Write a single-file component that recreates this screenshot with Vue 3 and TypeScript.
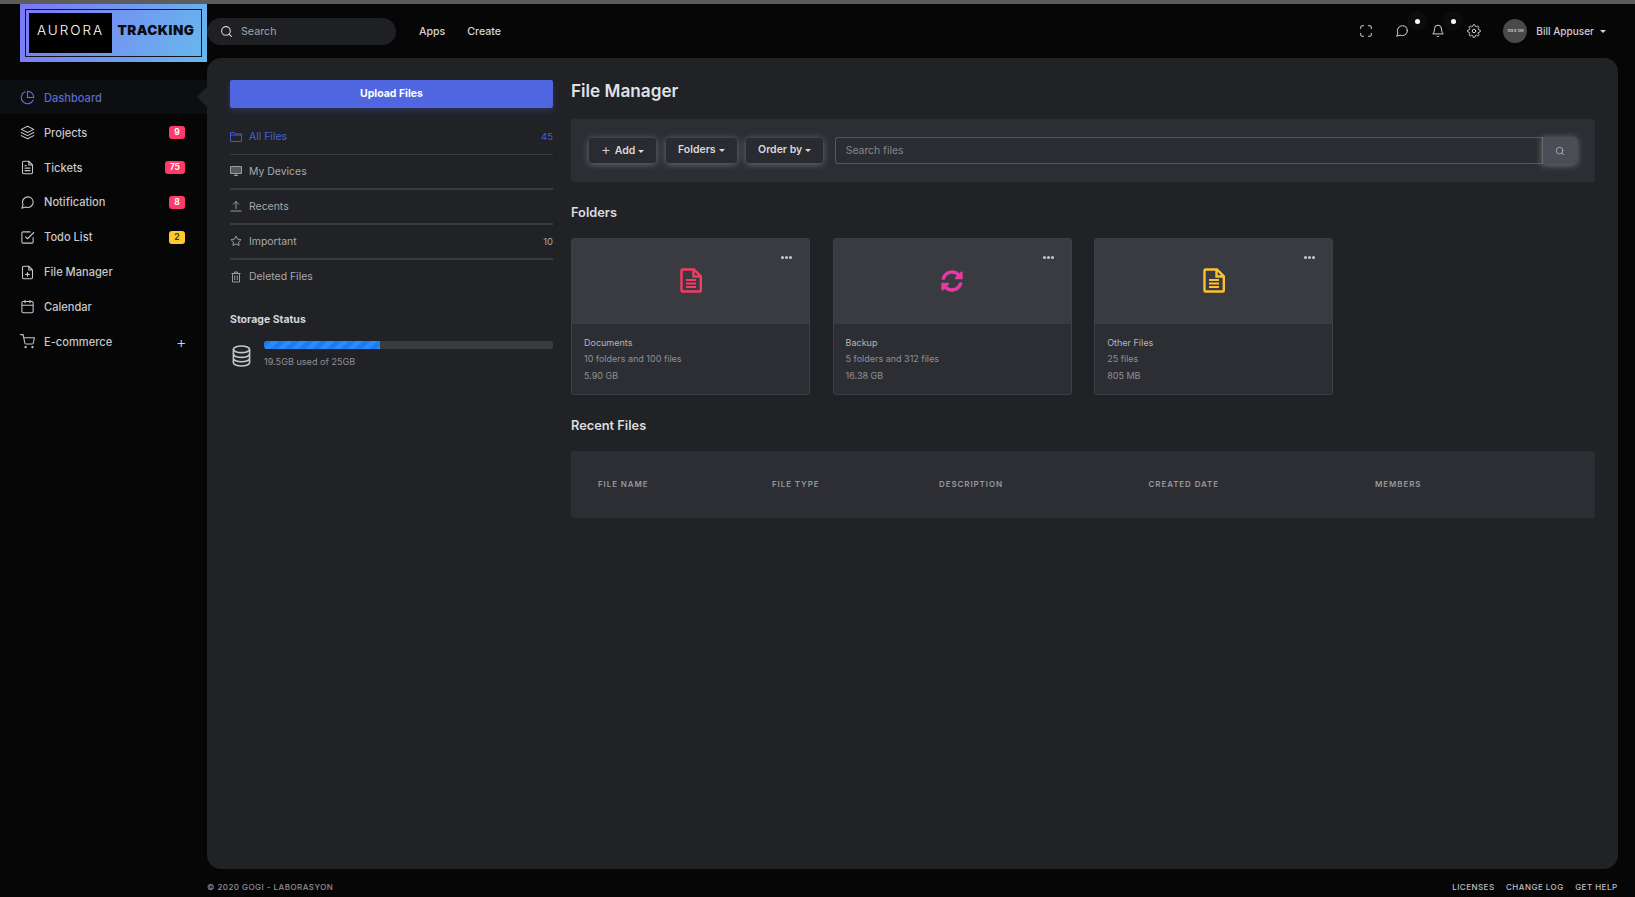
<script setup lang="ts">
const msgPath = 'M21 11.5a8.38 8.38 0 0 1-.9 3.8 8.5 8.5 0 0 1-7.6 4.7 8.38 8.38 0 0 1-3.8-.9L3 21l1.9-5.7a8.38 8.38 0 0 1-.9-3.8 8.5 8.5 0 0 1 4.7-7.6 8.38 8.38 0 0 1 3.8-.9h.5a8.48 8.48 0 0 1 8 8v.5z'
const docPath = 'M14 2H6a2 2 0 0 0-2 2v16a2 2 0 0 0 2 2h12a2 2 0 0 0 2-2V8z M14 2v6h6'
const navItems = [
  { label: 'Dashboard', active: true, d: 'M21.21 15.89A10 10 0 1 1 8 2.83 M22 12A10 10 0 0 0 12 2v10z' },
  { label: 'Projects', badge: '9', tone: 'red', d: 'M12 2 2 7l10 5 10-5-10-5z M2 17l10 5 10-5 M2 12l10 5 10-5' },
  { label: 'Tickets', badge: '75', tone: 'red', d: docPath + ' M16 13H8 M16 17H8 M10 9H8' },
  { label: 'Notification', badge: '8', tone: 'red', d: msgPath },
  { label: 'Todo List', badge: '2', tone: 'yellow', d: 'M9 11l3 3L22 4 M21 12v7a2 2 0 0 1-2 2H5a2 2 0 0 1-2-2V5a2 2 0 0 1 2-2h11' },
  { label: 'File Manager', d: docPath + ' M12 18v-6 M9 15h6' },
  { label: 'Calendar', d: 'M5 4h14a2 2 0 0 1 2 2v14a2 2 0 0 1-2 2H5a2 2 0 0 1-2-2V6a2 2 0 0 1 2-2z M16 2v4 M8 2v4 M3 10h18' },
  { label: 'E-commerce', plus: true, cart: true, d: 'M1 1h4l2.68 13.39a2 2 0 0 0 2 1.61h9.72a2 2 0 0 0 2-1.61L23 6H6' },
]
const fileItems = [
  { label: 'All Files', count: '45', active: true, fill: 'none', d: 'M1 3h8l2 3h12v15H1z M1 8h22' },
  { label: 'My Devices', fill: 'rgba(167,168,171,.4)', d: 'M1 3h22v14H1z M8 21h8 M12 17v4' },
  { label: 'Recents', fill: 'none', d: 'M12 18V3 M6 9l6-6 6 6 M1 22h22' },
  { label: 'Important', count: '10', fill: 'none', d: 'M12 2l3.09 6.26L22 9.27l-5 4.87 1.18 6.88L12 17.77l-6.18 3.25L7 14.14 2 9.27l6.91-1.01L12 2z' },
  { label: 'Deleted Files', fill: 'none', d: 'M3 5h18 M9 5V2h6v3 M5 5v17h14V5 M9.500 9v9 M14.500 9v9' },
]
const syncPath = 'M370.72 133.28C339.458 104.008 298.888 87.962 255.848 88c-77.458.068-144.328 53.178-162.791 126.85-1.344 5.363-6.122 9.15-11.651 9.15H24.103c-7.498 0-13.194-6.807-11.807-14.176C33.933 94.924 134.813 8 256 8c66.448 0 126.791 26.136 171.315 68.685L463.03 40.97C478.149 25.851 504 36.559 504 57.941V192c0 13.255-10.745 24-24 24H345.941c-21.382 0-32.09-25.851-16.971-40.971l41.75-41.749zM32 296h134.059c21.382 0 32.09 25.851 16.971 40.971l-41.75 41.75c31.262 29.273 71.835 45.319 114.876 45.28 77.418-.07 144.315-53.144 162.787-126.849 1.344-5.363 6.122-9.15 11.651-9.15h57.304c7.498 0 13.194 6.807 11.807 14.176C478.067 417.076 377.187 504 256 504c-66.448 0-126.791-26.136-171.315-68.685L48.97 471.03C33.851 486.149 8 475.441 8 454.059V320c0-13.255 10.745-24 24-24z'
const folders = [
  { name: 'Documents', info: '10 folders and 100 files', size: '5.90 GB', kind: 'doc', color: '#f43b66' },
  { name: 'Backup', info: '5 folders and 312 files', size: '16.38 GB', kind: 'sync', color: '#e53aa5' },
  { name: 'Other Files', info: '25 files', size: '805 MB', kind: 'doc', color: '#fdc02f' },
]
const columns = ['FILE NAME', 'FILE TYPE', 'DESCRIPTION', 'CREATED DATE', 'MEMBERS']
const tools = [{ label: 'Add', plus: true }, { label: 'Folders' }, { label: 'Order by' }]
const storageUsed = 40
</script>

<template>
  <div class="page">
    <div class="strip"></div>
    <div class="shell">
      <aside class="side">
        <div class="logo">
          <div class="logo-frame">
            <div class="logo-box">AURORA</div>
            <div class="logo-word">TRACKING</div>
          </div>
        </div>
        <nav class="nav">
          <a v-for="item in navItems" :key="item.label" class="nav-row" :class="{ active: item.active }">
            <svg class="nav-icon" viewBox="0 0 24 24" fill="none" stroke="currentColor" stroke-width="1.7" stroke-linecap="round" stroke-linejoin="round">
              <path :d="item.d" />
              <template v-if="item.cart">
                <circle cx="9" cy="21" r="1" />
                <circle cx="20" cy="21" r="1" />
              </template>
            </svg>
            <span class="nav-label">{{ item.label }}</span>
            <span v-if="item.badge" class="badge" :class="item.tone">{{ item.badge }}</span>
            <span v-if="item.plus" class="nav-plus">+</span>
          </a>
        </nav>
      </aside>

      <div class="right">
        <header class="top">
          <div class="search">
            <svg class="search-icon" viewBox="0 0 24 24" fill="none" stroke="currentColor" stroke-width="2" stroke-linecap="round">
              <circle cx="11" cy="11" r="8" /><path d="M21 21l-4.35-4.35" />
            </svg>
            <span>Search</span>
          </div>
          <a class="top-link first">Apps</a>
          <a class="top-link">Create</a>
          <div class="top-right">
            <span class="top-icon">
              <svg viewBox="0 0 24 24" fill="none" stroke="currentColor" stroke-width="1.7" stroke-linecap="round" stroke-linejoin="round">
                <path d="M3 8V5a2 2 0 0 1 2-2h3 M16 3h3a2 2 0 0 1 2 2v3 M21 16v3a2 2 0 0 1-2 2h-3 M8 21H5a2 2 0 0 1-2-2v-3" />
              </svg>
            </span>
            <span class="top-icon dotted">
              <svg viewBox="0 0 24 24" fill="none" stroke="currentColor" stroke-width="1.7" stroke-linecap="round" stroke-linejoin="round"><path :d="msgPath" /></svg>
            </span>
            <span class="top-icon dotted">
              <svg viewBox="0 0 24 24" fill="none" stroke="currentColor" stroke-width="1.7" stroke-linecap="round" stroke-linejoin="round">
                <path d="M18 8A6 6 0 0 0 6 8c0 7-3 9-3 9h18s-3-2-3-9 M13.73 21a2 2 0 0 1-3.46 0" />
              </svg>
            </span>
            <span class="top-icon">
              <svg viewBox="0 0 24 24" fill="none" stroke="currentColor" stroke-width="1.7" stroke-linecap="round" stroke-linejoin="round">
                <circle cx="12" cy="12" r="3" />
                <path d="M19.4 15a1.65 1.65 0 0 0 .33 1.82l.06.06a2 2 0 0 1 0 2.83 2 2 0 0 1-2.83 0l-.06-.06a1.65 1.65 0 0 0-1.82-.33 1.65 1.65 0 0 0-1 1.51V21a2 2 0 0 1-2 2 2 2 0 0 1-2-2v-.09A1.65 1.65 0 0 0 9 19.4a1.65 1.65 0 0 0-1.82.33l-.06.06a2 2 0 0 1-2.83 0 2 2 0 0 1 0-2.83l.06-.06a1.65 1.65 0 0 0 .33-1.82 1.65 1.65 0 0 0-1.51-1H3a2 2 0 0 1-2-2 2 2 0 0 1 2-2h.09A1.65 1.65 0 0 0 4.6 9a1.65 1.65 0 0 0-.33-1.82l-.06-.06a2 2 0 0 1 0-2.83 2 2 0 0 1 2.83 0l.06.06a1.65 1.65 0 0 0 1.82.33H9a1.65 1.65 0 0 0 1-1.51V3a2 2 0 0 1 2-2 2 2 0 0 1 2 2v.09a1.65 1.65 0 0 0 1 1.51 1.65 1.65 0 0 0 1.82-.33l.06-.06a2 2 0 0 1 2.83 0 2 2 0 0 1 0 2.83l-.06.06a1.65 1.65 0 0 0-.33 1.82V9a1.65 1.65 0 0 0 1.51 1H21a2 2 0 0 1 2 2 2 2 0 0 1-2 2h-.09a1.65 1.65 0 0 0-1.51 1z" />
              </svg>
            </span>
            <div class="avatar">128 X 128</div>
            <span class="user">Bill Appuser</span>
            <span class="caret user-caret"></span>
          </div>
        </header>

        <main class="panel">
          <section class="left-col">
            <button class="upload">Upload Files</button>
            <ul class="file-list">
              <li v-for="f in fileItems" :key="f.label" class="file-row" :class="{ active: f.active }">
                <svg class="file-icon" viewBox="0 0 24 24" :fill="f.fill" stroke="currentColor" stroke-width="1.8" stroke-linejoin="round">
                  <path :d="f.d" />
                </svg>
                <span class="file-label">{{ f.label }}</span>
                <span v-if="f.count" class="file-count">{{ f.count }}</span>
              </li>
            </ul>
            <h4 class="storage-title">Storage Status</h4>
            <div class="storage">
              <svg class="db" viewBox="0 0 20 23" fill="none" stroke="currentColor" stroke-width="1.7">
                <ellipse cx="10" cy="4.5" rx="8.5" ry="3.5" />
                <path d="M1.5 4.5v14c0 2 3.8 3.5 8.5 3.5s8.500-1.500 8.500-3.500v-14 M1.500 9.500c0 2 3.800 3.500 8.500 3.500s8.500-1.500 8.500-3.500 M1.500 14c0 2 3.800 3.500 8.500 3.500s8.500-1.500 8.500-3.500" />
              </svg>
              <div class="storage-body">
                <div class="bar"><div class="bar-fill" :style="{ width: storageUsed + '%' }"></div></div>
                <div class="storage-text">19.5GB used of 25GB</div>
              </div>
            </div>
          </section>

          <section class="right-col">
            <h2 class="title">File Manager</h2>
            <div class="toolbar">
              <button v-for="t in tools" :key="t.label" class="tool">
                <span v-if="t.plus" class="tool-plus">+</span>{{ t.label }}<span class="caret"></span>
              </button>
              <div class="file-search">
                <div class="file-input">Search files</div>
                <button class="file-btn">
                  <svg viewBox="0 0 24 24" fill="none" stroke="currentColor" stroke-width="2" stroke-linecap="round">
                    <circle cx="11" cy="11" r="8" /><path d="M21 21l-4.350-4.350" />
                  </svg>
                </button>
              </div>
            </div>

            <h3 class="section">Folders</h3>
            <div class="cards">
              <article v-for="c in folders" :key="c.name" class="card">
                <div class="card-top">
                  <span class="dots"><i></i><i></i><i></i></span>
                  <svg v-if="c.kind === 'doc'" class="card-icon" viewBox="0 0 22 25" fill="none" :stroke="c.color" stroke-width="2.400" stroke-linejoin="miter">
                    <path d="M2.500 1.500h11.500l6.800 6.800v14.200a1 1 0 0 1-1 1H2.500a1 1 0 0 1-1-1V2.500a1 1 0 0 1 1-1z M13.500 1.500v7h7.300" />
                    <path stroke-width="1.800" d="M6 12h10 M6 15.500h10 M6 19h10" />
                  </svg>
                  <svg v-else class="card-sync" viewBox="0 0 512 512"><path :fill="c.color" :d="syncPath" /></svg>
                </div>
                <div class="card-body">
                  <div class="card-name">{{ c.name }}</div>
                  <div class="card-info">{{ c.info }}</div>
                  <div class="card-info last">{{ c.size }}</div>
                </div>
              </article>
            </div>

            <h3 class="section recent">Recent Files</h3>
            <div class="table">
              <span v-for="c in columns" :key="c" class="th">{{ c }}</span>
            </div>
          </section>
        </main>

        <footer class="foot">
          <span>© 2020 GOGI - LABORASYON</span>
          <div class="foot-links">
            <a>LICENSES</a><a>CHANGE LOG</a><a>GET HELP</a>
          </div>
        </footer>
      </div>
    </div>
  </div>
</template>

<style>
html, body { margin: 0; background: #060607; }
</style>

<style scoped>
* { box-sizing: border-box; }
.page {
  width: 1635px;
  height: 897px;
  overflow: hidden;
  background: #060607;
  font-family: Inter, "Liberation Sans", sans-serif;
  color: #c9cacd;
}
.strip { height: 4px; background: #5c5c5c; }
.shell { display: grid; grid-template-columns: 207px 1fr; height: 893px; }

/* sidebar */
.logo {
  margin-left: 20px;
  height: 58px;
  padding: 5px;
  background: linear-gradient(120deg, #7d76f6 0%, #66b9ec 100%);
}
.logo-frame {
  height: 48px;
  border: 1px solid #14161f;
  padding: 3px;
  display: flex;
  align-items: stretch;
}
.logo-box {
  width: 83px;
  background: #000;
  color: #fff;
  font-size: 13.5px;
  letter-spacing: 1.95px;
  font-weight: 300;
  padding-bottom: 7px;
  display: flex;
  align-items: center;
  justify-content: center;
}
.logo-word {
  flex: 1;
  color: #0c0c12;
  font-weight: 900;
  font-size: 13.5px;
  letter-spacing: .45px;
  padding: 0 0 7px 2px;
  display: flex;
  align-items: center;
  justify-content: center;
}
.nav { margin-top: 17.5px; }
.nav-row {
  position: relative;
  display: flex;
  align-items: center;
  height: 34.85px;
  padding: 2px 22px 0 20px;
  font-size: 11.1px;
  font-weight: 500;
  color: #c6c7ca;
}
.nav-row.active { background: #0d0e11; color: #5a6bd0; }
.nav-row.active::after {
  content: "";
  position: absolute;
  right: 0;
  top: 50%;
  margin-top: -10px;
  border: 10px solid transparent;
  border-right-color: #212226;
  border-left-width: 0;
}
.nav-icon { width: 15px; height: 15px; flex: none; color: #c6c7ca; }
.nav-row.active .nav-icon { color: #6474d6; }
.nav-label { margin-left: 9px; flex: 1; }
.badge {
  height: 13px;
  min-width: 16px;
  padding: 0 5px;
  border-radius: 3px;
  font-size: 8.500px;
  font-weight: 700;
  line-height: 13px;
  text-align: center;
}
.badge.red { background: #ff3a6b; color: #fff; }
.badge.yellow { background: #ffc82e; color: #4a3a10; }
.nav-plus { font-size: 16px; font-weight: 300; color: #d5d5d8; margin-right: -1.5px; line-height: 1; }

/* top bar */
.right { display: flex; flex-direction: column; min-width: 0; }
.top { height: 54px; display: flex; align-items: center; padding-right: 29px; }
.search {
  width: 189px;
  height: 27px;
  border-radius: 14px;
  background: #1f2023;
  display: flex;
  align-items: center;
  padding-left: 13px;
  font-size: 10.7px;
  color: #a5a6a9;
}
.search-icon { width: 13px; height: 13px; color: #d5d5d8; margin-right: 8px; }
.top-link { font-size: 10.6px; font-weight: 500; color: #d5d6d9; margin-left: 22px; }
.top-link.first { margin-left: 23px; }
.top-right { margin-left: auto; display: flex; align-items: center; }
.top-icon { position: relative; width: 14px; height: 14px; margin-right: 22px; display: block; color: #d5d5d8; }
.top-icon svg { display: block; width: 14px; height: 14px; }
.top-icon.dotted::before {
  content: "";
  position: absolute;
  left: 12px;
  top: -13px;
  width: 20px;
  height: 20px;
  border-radius: 50%;
  background: #0c0c0e;
}
.top-icon.dotted::after {
  content: "";
  position: absolute;
  left: 19.5px;
  top: -5.5px;
  width: 5px;
  height: 5px;
  border-radius: 50%;
  background: #fff;
}
.avatar {
  width: 24px;
  height: 24px;
  border-radius: 50%;
  background: #4a4a4a;
  color: #cfcfcf;
  font-size: 3.500px;
  font-weight: 700;
  display: flex;
  align-items: center;
  justify-content: center;
  white-space: nowrap;
}
.user { margin-left: 9px; font-size: 10.05px; font-weight: 500; color: #cfd0d3; }
.caret {
  display: inline-block;
  width: 0;
  height: 0;
  margin-left: 3px;
  vertical-align: middle;
  border-top: 3px solid currentColor;
  border-left: 3px solid transparent;
  border-right: 3px solid transparent;
}
.user-caret { margin-left: 6px; color: #d5d5d8; }

/* panel */
.panel {
  height: 811px;
  margin-right: 17px;
  background: #212226;
  border-radius: 14px;
  padding: 22px 23px 0;
  display: grid;
  grid-template-columns: 323px 1fr;
  column-gap: 18px;
}
.upload {
  display: block;
  width: 100%;
  height: 28px;
  border: 0;
  border-radius: 2px;
  padding: 0 0 2px;
  background: #5066e0;
  color: #fff;
  font: 700 10.500px Inter, "Liberation Sans", sans-serif;
  box-shadow: 0 3px 6px rgba(80, 102, 224, .25);
}
.file-list { list-style: none; margin: 11.5px 0 0; padding: 0; }
.file-row {
  display: flex;
  align-items: center;
  height: 35px;
  border-bottom: 2px solid #3a3b40;
  font-size: 10.45px;
  color: #a7a8ab;
}
.file-row:first-child { border-bottom-width: 1px; }
.file-row:last-child { border-bottom: 0; height: 34px; }
.file-row.active { color: #4660dc; }
.file-icon { width: 12px; height: 12px; flex: none; }
.file-label { margin-left: 7px; flex: 1; }
.file-count { font-size: 9.500px; }
.storage-title { margin: 19px 0 0; font-size: 10.500px; line-height: 13px; font-weight: 700; color: #d5d6d9; }
.storage { display: flex; margin-top: 15px; }
.db { width: 19px; height: 22px; margin: 4px 13px 0 2px; color: #c6c7ca; flex: none; }
.storage-body { flex: 1; }
.bar { height: 8px; border-radius: 3px; background: #3a3b41; overflow: hidden; }
.bar-fill {
  height: 100%;
  background: repeating-linear-gradient(135deg, #1b7cf0 0 5px, #2a8bff 5px 10px);
}
.storage-text { margin-top: 7px; font-size: 9.1px; line-height: 12px; color: #8f9094; }

.title { margin: 0 0 17px; font-size: 17.2px; line-height: 22px; font-weight: 600; color: #dfe1e6; }
.toolbar {
  height: 63px;
  padding: 18px;
  background: #2d2e33;
  border-radius: 3px;
  display: flex;
  align-items: center;
  gap: 9.5px;
}
.tool {
  height: 25px;
  padding: 0 12px 2px;
  border: 0;
  border-radius: 3px;
  background: #2a2b30;
  color: #d8d9dc;
  font: 600 10.500px Inter, "Liberation Sans", sans-serif;
  box-shadow: 0 1px 7px rgba(205, 205, 215, .42);
  white-space: nowrap;
}
.tool-plus { font-size: 15px; font-weight: 300; margin-right: 4px; vertical-align: -1px; }
.file-search { flex: 1; display: flex; margin-left: 2px; height: 27px; }
.file-input {
  flex: 1;
  border: 1px solid #55565c;
  border-right: 0;
  border-radius: 3px 0 0 3px;
  background: #2c2d32;
  font-size: 10.400px;
  line-height: 25px;
  color: #85868a;
  padding-left: 10px;
}
.file-btn {
  width: 35px;
  border: 0;
  border-left: 1px solid #6a6b72;
  border-radius: 0 3px 3px 0;
  background: #4b4d56;
  color: #b5b6ba;
  box-shadow: 0 1px 7px rgba(205, 205, 215, .45);
  display: flex;
  align-items: center;
  justify-content: center;
  padding: 0;
}
.file-btn svg { width: 10px; height: 10px; }
.section { margin: 23px 0 17px; font-size: 12.8px; line-height: 16px; font-weight: 600; color: #dcdde1; }
.cards { display: flex; gap: 22.6px; }
.card {
  width: 239px;
  height: 157px;
  border: 1px solid #3e3f44;
  border-radius: 3px;
  background: #2d2e33;
  overflow: hidden;
}
.card-top {
  position: relative;
  height: 86px;
  margin: -1px -1px 0;
  background: #3a3b40;
  display: flex;
  align-items: center;
  justify-content: center;
}
.dots { position: absolute; top: 18px; right: 18px; display: flex; gap: 1px; }
.dots i { width: 3px; height: 3px; border-radius: 50%; background: #c6c7ca; display: block; }
.card-icon { width: 22px; height: 25px; margin-bottom: 2px; }
.card-sync { width: 22px; height: 22px; }
.card-body { padding: 13px 12px 0; }
.card-name { font-size: 9px; line-height: 12px; color: #b5b6ba; }
.card-info { margin-top: 4px; font-size: 9px; line-height: 12px; color: #8f9094; }
.card-info.last { margin-top: 5px; }
.section.recent { margin: 23px 0 17px; }
.table {
  height: 67px;
  background: #2d2e33;
  border-radius: 3px;
  padding: 0 0 2px 27px;
  display: grid;
  grid-template-columns: 174px 167px 209.5px 226.5px 1fr;
  align-items: center;
}
.th { font-size: 8px; font-weight: 600; letter-spacing: .9px; color: #97989c; }

.foot {
  flex: 1;
  display: flex;
  align-items: center;
  justify-content: space-between;
  padding-right: 17.5px;
  font-size: 8px;
  font-weight: 500;
  letter-spacing: .47px;
  color: #8f9094;
  padding-top: 8px;
}
.foot-links { display: flex; gap: 11.5px; color: #bdbec2; }
</style>
